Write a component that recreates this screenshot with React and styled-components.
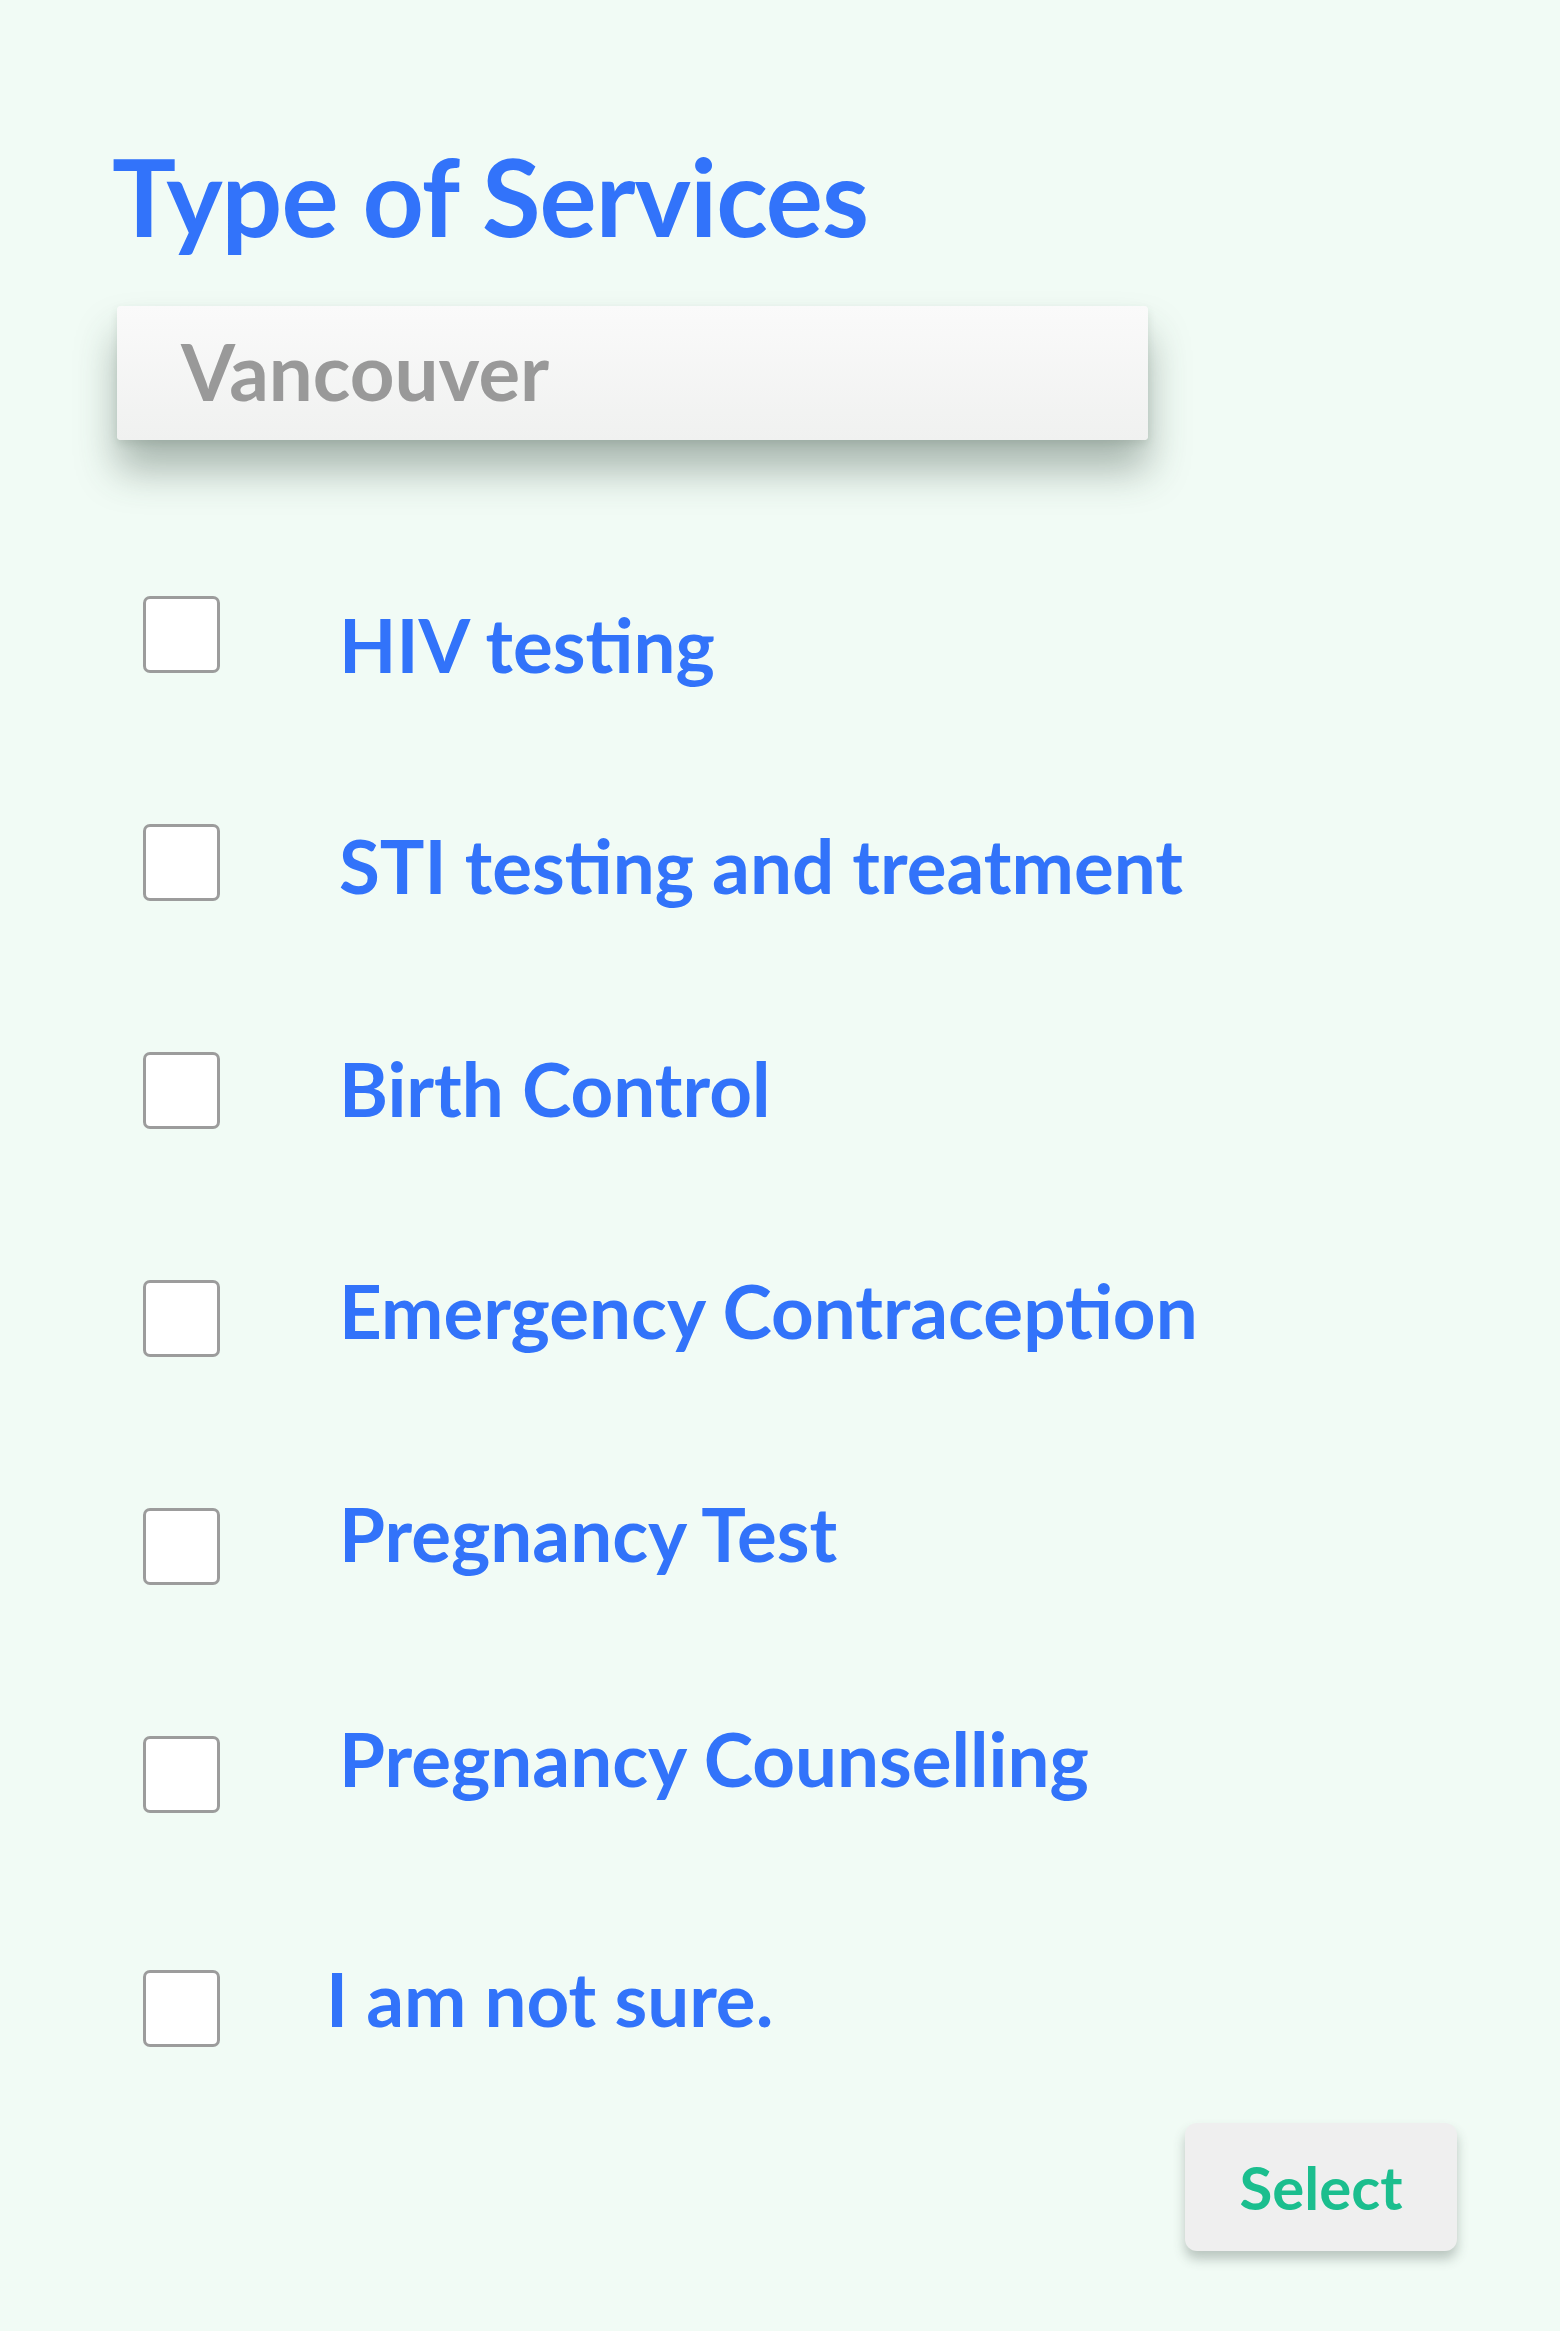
import React from 'react';
import styled, { createGlobalStyle } from 'styled-components';

const GlobalStyle = createGlobalStyle`
    html, body {
        margin: 0;
        padding: 0;
        background-color: #F1FBF5;
        font-family: 'Lato', 'Noto Sans', sans-serif;
    }
`;

const Page = styled.main`
    width: 1560px;
    min-height: 2331px;
    box-sizing: border-box;
    padding: 132px 103px 0 112px;
    display: flex;
    flex-direction: column;
    background-color: #F1FBF5;
`;

const Title = styled.h1`
    margin: 0;
    font-size: 107px;
    line-height: 1.2;
    font-weight: 700;
    color: #3273FA;
    letter-spacing: -1px;
`;

const CityField = styled.div`
    margin: 46px 0 0 5px;
    width: 1031px;
    height: 134px;
    box-sizing: border-box;
    padding: 0 0 4px 64px;
    display: flex;
    align-items: center;
    border-radius: 4px;
    background: linear-gradient(#FAFAFA, #F0F1F0);
    box-shadow: 0 30px 40px rgba(50, 70, 60, 0.38), 0 4px 8px rgba(50, 70, 60, 0.12);
    font-size: 78px;
    font-weight: 700;
    color: #999999;
`;

const ServiceList = styled.ul`
    list-style: none;
    margin: 156px 0 0 31px;
    padding: 0;
    display: flex;
    flex-direction: column;
    gap: 151px;
`;

const ServiceItem = styled.li`
    display: flex;
    align-items: flex-start;
    height: 77px;

    &:last-child {
        margin-top: 6px;
    }
`;

const Checkbox = styled.span`
    flex: none;
    width: 77px;
    height: 77px;
    box-sizing: border-box;
    border: 3px solid #9C9C9C;
    border-radius: 7px;
    background-color: #FFFFFF;
`;

const ServiceLabel = styled.span`
    margin: ${({ $offset }) => $offset}px 0 0 ${({ $indent }) => $indent}px;
    font-size: 74.5px;
    line-height: 1;
    font-weight: 700;
    color: #3273FA;
    white-space: nowrap;
`;

const Footer = styled.div`
    display: flex;
    justify-content: flex-end;
    margin-top: 76px;
`;

const SelectButton = styled.button`
    width: 272px;
    height: 128px;
    border: none;
    border-radius: 12px;
    background-color: #EFEFEF;
    box-shadow: 0 8px 12px rgba(60, 75, 68, 0.3);
    font-family: inherit;
    font-size: 60px;
    font-weight: 700;
    color: #1BBE8E;
    cursor: pointer;
`;

const services = [
    { label: 'HIV testing', offset: 11 },
    { label: 'STI testing and treatment', offset: 4 },
    { label: 'Birth Control', offset: -1 },
    { label: 'Emergency Contraception', offset: -7 },
    { label: 'Pregnancy Test', offset: -12 },
    { label: 'Pregnancy Counselling', offset: -15 },
    { label: 'I am not sure.', offset: -9, indent: 106 },
];

export default function App() {
    return (
        <>
            <GlobalStyle />
            <Page>
                <Title>Type of Services</Title>
                <CityField>Vancouver</CityField>
                <ServiceList>
                    {services.map((s) => (
                        <ServiceItem key={s.label}>
                            <Checkbox />
                            <ServiceLabel $offset={s.offset} $indent={s.indent ?? 119}>
                                {s.label}
                            </ServiceLabel>
                        </ServiceItem>
                    ))}
                </ServiceList>
                <Footer>
                    <SelectButton>Select</SelectButton>
                </Footer>
            </Page>
        </>
    );
}
